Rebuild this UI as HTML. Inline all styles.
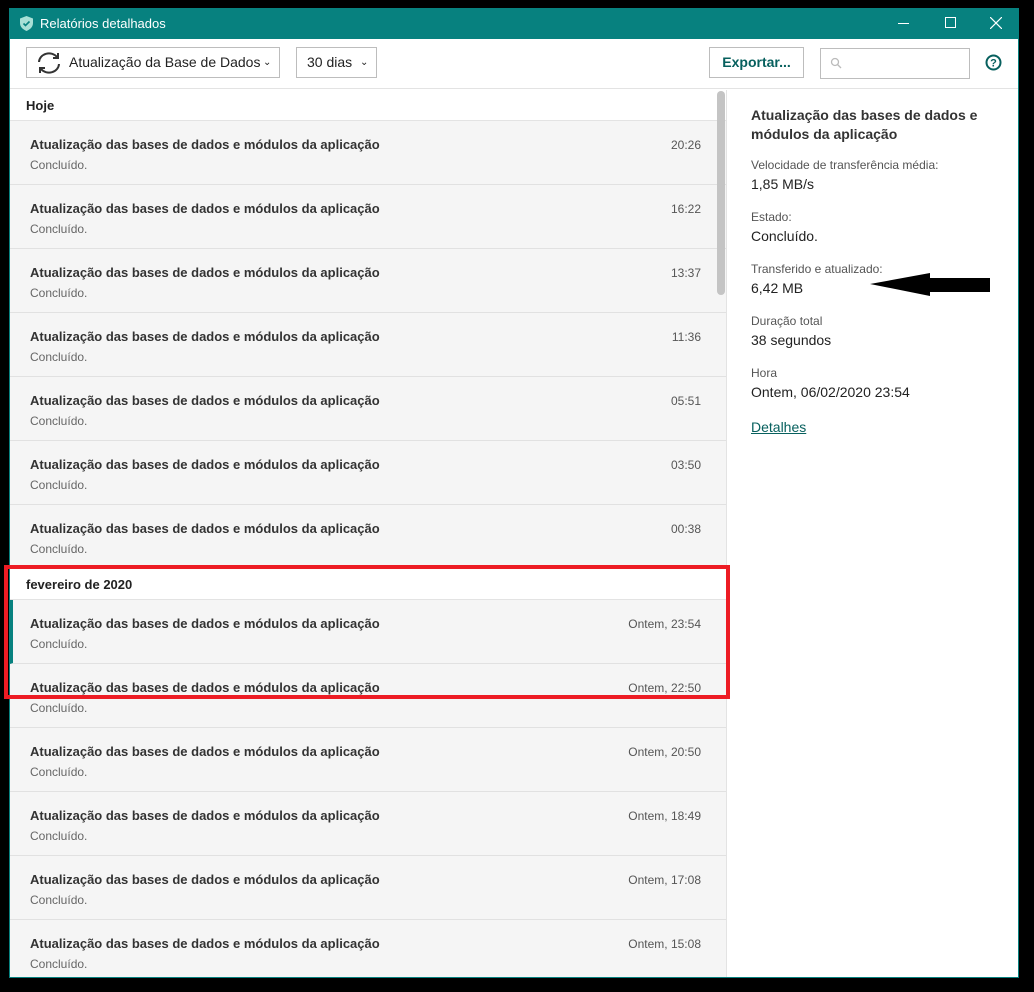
<!DOCTYPE html>
<html><head><meta charset="utf-8"><style>
*{margin:0;padding:0;box-sizing:border-box}
body{width:1034px;height:992px;background:#000;position:relative;overflow:hidden;font-family:"Liberation Sans",sans-serif;color:#222}
#win{position:absolute;left:9px;top:8px;width:1010px;height:970px;background:#fff;border:1px solid #07817f;overflow:hidden}
#title{position:absolute;left:0;top:0;width:100%;height:30px;background:#07817f;color:#fff;font-size:13px}
#tb{position:absolute;left:0;top:30px;width:100%;height:50px;border-bottom:1px solid #e3e3e3;background:#fff}
.btn{position:absolute;border:1px solid #bdbdbd;background:#fff;font-size:14px;height:31px;line-height:29px}
#list{position:absolute;left:0;top:81px;width:716px;height:900px;background:#f5f5f5}
.hdr{height:31px;background:#fff;font-weight:bold;font-size:13px;padding-left:16px;line-height:31px;border-bottom:1px solid #e3e3e3}
.row{height:64px;border-bottom:1px solid #e1e1e1;position:relative;background:#f5f5f5}
.row .t{position:absolute;left:20px;top:16px;font-size:13px;font-weight:bold;color:#333}
.row .s{position:absolute;left:20px;top:37px;font-size:12px;color:#666}
.row .h{position:absolute;right:25px;top:17px;font-size:12px;color:#555}
#right{position:absolute;left:716px;top:81px;width:293px;height:900px;border-left:1px solid #e3e3e3;background:#fff;padding:16px 0 0 24px}
.lab{font-size:12px;color:#555;margin-top:18px}
.val{font-size:14px;color:#222;margin-top:4px}
</style></head><body>
<div id="win">
 <div id="title">
  <svg style="position:absolute;left:10px;top:7px" width="13" height="15" viewBox="0 0 13 15"><path d="M6.5 0L13 2.5V7c0 4-3 6.5-6.5 8C3 13.5 0 11 0 7V2.5z" fill="#a8e0d6"/><path d="M3.5 7.5l2 2 4-4" stroke="#07817f" stroke-width="1.6" fill="none"/></svg>
  <span style="position:absolute;left:30px;top:7px">Relatórios detalhados</span>
  <div style="position:absolute;left:888px;top:14px;width:11px;height:1px;background:#fff"></div>
  <div style="position:absolute;left:935px;top:8px;width:11px;height:11px;border:1px solid #fff"></div>
  <svg style="position:absolute;left:980px;top:8px" width="12" height="12"><path d="M0 0L12 12M12 0L0 12" stroke="#fff" stroke-width="1.2"/></svg>
 </div>
 <div id="tb">
  <div class="btn" style="left:16px;top:8px;width:254px">
   <svg style="position:absolute;left:9px;top:3px" width="26" height="24" viewBox="0 0 26 24" fill="none" stroke="#333" stroke-width="2"><path d="M3 11a10 9 0 0 1 18-5"/><path d="M22 2v5h-5"/><path d="M23 13a10 9 0 0 1-18 5"/><path d="M4 22v-5h5"/></svg>
   <span style="position:absolute;left:42px">Atualização da Base de Dados</span>
   <span style="position:absolute;left:236px;font-size:10px">&#8964;</span>
  </div>
  <div class="btn" style="left:286px;top:8px;width:81px"><span style="position:absolute;left:10px">30 dias</span><span style="position:absolute;left:63px;font-size:10px">&#8964;</span></div>
  <div class="btn" style="left:699px;top:8px;width:95px;color:#07605e;font-weight:bold;text-align:center">Exportar...</div>
  <div class="btn" style="left:810px;top:9px;width:150px;height:31px">
   <svg style="position:absolute;left:9px;top:8px" width="12" height="12"><circle cx="5" cy="5" r="3.5" stroke="#bbb" fill="none" stroke-width="1.3"/><path d="M7.5 7.5L11 11" stroke="#bbb" stroke-width="1.3"/></svg></div>
  <svg style="position:absolute;left:975px;top:15px" width="17" height="17"><circle cx="8.5" cy="8.5" r="7" stroke="#07605e" stroke-width="2" fill="none"/><text x="8.5" y="12.5" font-size="11" font-weight="bold" text-anchor="middle" fill="#07605e" font-family="Liberation Sans">?</text></svg>
 </div>
 <div id="list">
  <div class="hdr">Hoje</div>
  <div class="row"><div class="t">Atualização das bases de dados e módulos da aplicação</div><div class="s">Concluído.</div><div class="h">20:26</div></div>
  <div class="row"><div class="t">Atualização das bases de dados e módulos da aplicação</div><div class="s">Concluído.</div><div class="h">16:22</div></div>
  <div class="row"><div class="t">Atualização das bases de dados e módulos da aplicação</div><div class="s">Concluído.</div><div class="h">13:37</div></div>
  <div class="row"><div class="t">Atualização das bases de dados e módulos da aplicação</div><div class="s">Concluído.</div><div class="h">11:36</div></div>
  <div class="row"><div class="t">Atualização das bases de dados e módulos da aplicação</div><div class="s">Concluído.</div><div class="h">05:51</div></div>
  <div class="row"><div class="t">Atualização das bases de dados e módulos da aplicação</div><div class="s">Concluído.</div><div class="h">03:50</div></div>
  <div class="row"><div class="t">Atualização das bases de dados e módulos da aplicação</div><div class="s">Concluído.</div><div class="h">00:38</div></div>
  <div class="hdr">fevereiro de 2020</div>
  <div class="row" style="border-left:3px solid #07817f"><div class="t" style="left:17px">Atualização das bases de dados e módulos da aplicação</div><div class="s" style="left:17px">Concluído.</div><div class="h">Ontem, 23:54</div></div>
  <div class="row"><div class="t">Atualização das bases de dados e módulos da aplicação</div><div class="s">Concluído.</div><div class="h">Ontem, 22:50</div></div>
  <div class="row"><div class="t">Atualização das bases de dados e módulos da aplicação</div><div class="s">Concluído.</div><div class="h">Ontem, 20:50</div></div>
  <div class="row"><div class="t">Atualização das bases de dados e módulos da aplicação</div><div class="s">Concluído.</div><div class="h">Ontem, 18:49</div></div>
  <div class="row"><div class="t">Atualização das bases de dados e módulos da aplicação</div><div class="s">Concluído.</div><div class="h">Ontem, 17:08</div></div>
  <div class="row"><div class="t">Atualização das bases de dados e módulos da aplicação</div><div class="s">Concluído.</div><div class="h">Ontem, 15:08</div></div>
  <div style="position:absolute;left:707px;top:1px;width:8px;height:204px;background:#c4c4c4;border-radius:4px"></div>
 </div>
 <div id="right">
  <div style="font-size:14px;font-weight:bold;line-height:19px;color:#333">Atualização das bases de dados e<br>módulos da aplicação</div>
  <div class="lab" style="margin-top:14px">Velocidade de transferência média:</div><div class="val">1,85 MB/s</div>
  <div class="lab">Estado:</div><div class="val">Concluído.</div>
  <div class="lab">Transferido e atualizado:</div><div class="val">6,42 MB</div>
  <div class="lab">Duração total</div><div class="val">38 segundos</div>
  <div class="lab">Hora</div><div class="val">Ontem, 06/02/2020 23:54</div>
  <div class="val" style="margin-top:19px;color:#07605e;text-decoration:underline">Detalhes</div>
 </div>
</div>
<svg style="position:absolute;left:868px;top:270px" width="124" height="28"><path d="M2 14L62 3V8H122V22H62V26Z" fill="#000"/></svg>
<div style="position:absolute;left:4px;top:565px;width:726px;height:134px;border:4px solid #ed1c24"></div>
</body></html>
